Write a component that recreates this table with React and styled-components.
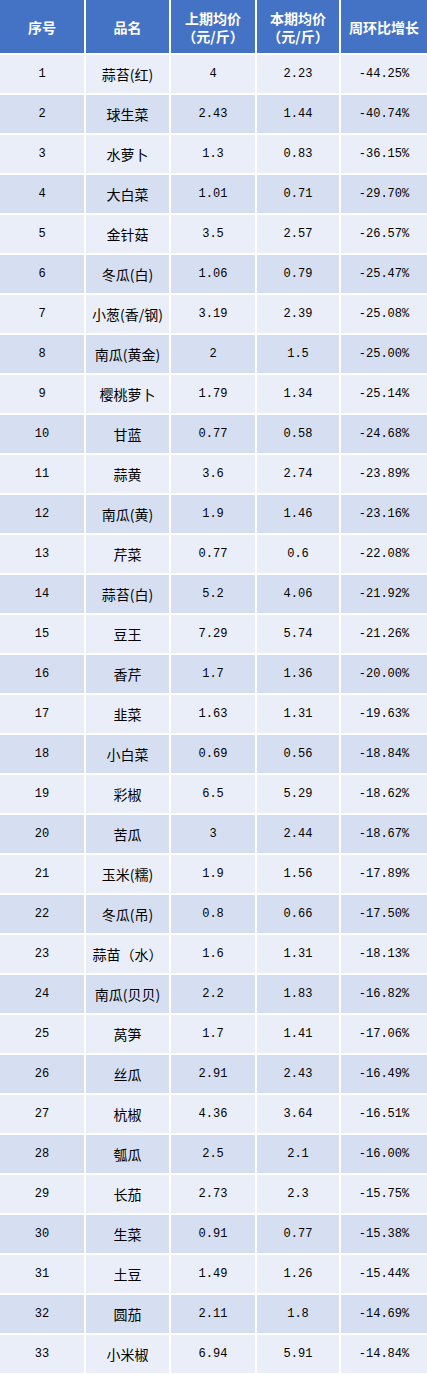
import React from 'react';
import styled, { createGlobalStyle } from 'styled-components';

const GlobalStyle = createGlobalStyle`
  html, body {
    margin: 0;
    padding: 0;
    background: #ffffff;
  }
`;

const rows = [
  [1, '蒜苔(红)', '4', '2.23', '-44.25%'],
  [2, '球生菜', '2.43', '1.44', '-40.74%'],
  [3, '水萝卜', '1.3', '0.83', '-36.15%'],
  [4, '大白菜', '1.01', '0.71', '-29.70%'],
  [5, '金针菇', '3.5', '2.57', '-26.57%'],
  [6, '冬瓜(白)', '1.06', '0.79', '-25.47%'],
  [7, '小葱(香/钢)', '3.19', '2.39', '-25.08%'],
  [8, '南瓜(黄金)', '2', '1.5', '-25.00%'],
  [9, '樱桃萝卜', '1.79', '1.34', '-25.14%'],
  [10, '甘蓝', '0.77', '0.58', '-24.68%'],
  [11, '蒜黄', '3.6', '2.74', '-23.89%'],
  [12, '南瓜(黄)', '1.9', '1.46', '-23.16%'],
  [13, '芹菜', '0.77', '0.6', '-22.08%'],
  [14, '蒜苔(白)', '5.2', '4.06', '-21.92%'],
  [15, '豆王', '7.29', '5.74', '-21.26%'],
  [16, '香芹', '1.7', '1.36', '-20.00%'],
  [17, '韭菜', '1.63', '1.31', '-19.63%'],
  [18, '小白菜', '0.69', '0.56', '-18.84%'],
  [19, '彩椒', '6.5', '5.29', '-18.62%'],
  [20, '苦瓜', '3', '2.44', '-18.67%'],
  [21, '玉米(糯)', '1.9', '1.56', '-17.89%'],
  [22, '冬瓜(吊)', '0.8', '0.66', '-17.50%'],
  [23, '蒜苗（水）', '1.6', '1.31', '-18.13%'],
  [24, '南瓜(贝贝)', '2.2', '1.83', '-16.82%'],
  [25, '莴笋', '1.7', '1.41', '-17.06%'],
  [26, '丝瓜', '2.91', '2.43', '-16.49%'],
  [27, '杭椒', '4.36', '3.64', '-16.51%'],
  [28, '瓠瓜', '2.5', '2.1', '-16.00%'],
  [29, '长茄', '2.73', '2.3', '-15.75%'],
  [30, '生菜', '0.91', '0.77', '-15.38%'],
  [31, '土豆', '1.49', '1.26', '-15.44%'],
  [32, '圆茄', '2.11', '1.8', '-14.69%'],
  [33, '小米椒', '6.94', '5.91', '-14.84%'],
];

const Table = styled.div`
  display: grid;
  grid-template-columns: 84px 83px 84px 82px 1fr;
  grid-auto-rows: 38px;
  grid-template-rows: 53px;
  gap: 2px;
  width: 427px;
  padding-bottom: 2px;
  background: #ffffff;
`;

const HeadCell = styled.div`
  display: flex;
  flex-direction: column;
  align-items: center;
  justify-content: center;
  background: #4472c4;
  color: #ffffff;
  font-family: 'Noto Sans CJK SC', sans-serif;
  font-size: 14px;
  font-weight: 700;
  line-height: 18px;
  text-align: center;
`;

const Cell = styled.div`
  display: flex;
  align-items: center;
  justify-content: center;
  background: ${({ $alt }) => ($alt ? '#d6dff2' : '#e9eef8')};
  color: #000000;
  font-family: ${({ $mono }) =>
    $mono ? "'Liberation Mono', 'Noto Sans CJK SC', monospace" : "'Noto Sans CJK SC', sans-serif"};
  font-size: ${({ $mono }) => ($mono ? '12px' : '14px')};
  white-space: nowrap;
`;

export default function App() {
  return (
    <>
      <GlobalStyle />
      <Table>
        <HeadCell>序号</HeadCell>
        <HeadCell>品名</HeadCell>
        <HeadCell>
          <span>上期均价</span>
          <span>（元/斤）</span>
        </HeadCell>
        <HeadCell>
          <span>本期均价</span>
          <span>（元/斤）</span>
        </HeadCell>
        <HeadCell>周环比增长</HeadCell>
        {rows.map(([no, name, prev, cur, pct]) => {
          const alt = no % 2 === 0;
          return (
            <React.Fragment key={no}>
              <Cell $alt={alt} $mono>{no}</Cell>
              <Cell $alt={alt}>{name}</Cell>
              <Cell $alt={alt} $mono>{prev}</Cell>
              <Cell $alt={alt} $mono>{cur}</Cell>
              <Cell $alt={alt} $mono>{pct}</Cell>
            </React.Fragment>
          );
        })}
      </Table>
    </>
  );
}
